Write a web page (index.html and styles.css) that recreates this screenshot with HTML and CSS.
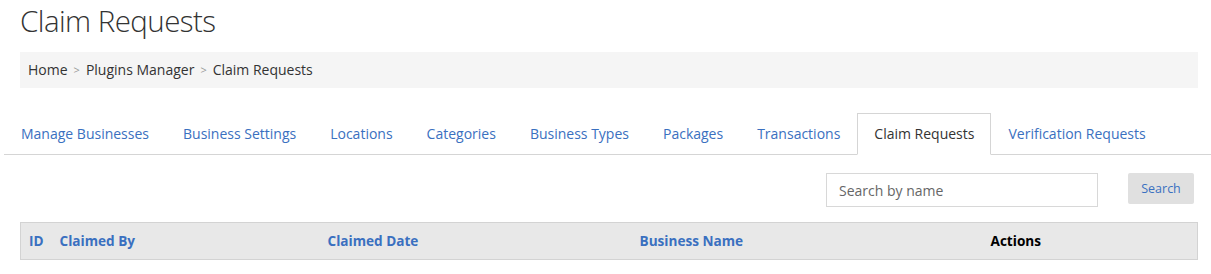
FILE: index.html
```html
<!DOCTYPE html>
<html>
<head>
<meta charset="utf-8">
<link rel="stylesheet" href="styles.css">
</head>
<body>
<div class="page">
  <h1 class="title">Claim Requests</h1>
  <div class="breadcrumb">
    <span>Home</span><span class="sep">&gt;</span><span>Plugins Manager</span><span class="sep">&gt;</span><span>Claim Requests</span>
  </div>
  <ul class="tabs">
    <li class="tab"><a>Manage Businesses</a></li>
    <li class="tab"><a>Business Settings</a></li>
    <li class="tab"><a>Locations</a></li>
    <li class="tab"><a>Categories</a></li>
    <li class="tab"><a>Business Types</a></li>
    <li class="tab"><a>Packages</a></li>
    <li class="tab"><a>Transactions</a></li>
    <li class="tab active"><a>Claim Requests</a></li>
    <li class="tab"><a>Verification Requests</a></li>
  </ul>
  <div class="search-row">
    <input class="search-input" type="text" placeholder="Search by name">
    <button class="search-btn">Search</button>
  </div>
  <table class="grid">
    <colgroup>
      <col class="c-id"><col class="c-by"><col class="c-date"><col class="c-name"><col class="c-act">
    </colgroup>
    <thead>
      <tr>
        <th class="link">ID</th>
        <th class="link">Claimed By</th>
        <th class="link">Claimed Date</th>
        <th class="link">Business Name</th>
        <th>Actions</th>
      </tr>
    </thead>
  </table>
</div>
</body>
</html>
```
FILE: styles.css
```css
* { box-sizing: border-box; }
html, body { margin: 0; padding: 0; background: #fff; }
body { font-family: "Open Sans", "Liberation Sans", sans-serif; font-size: 14px; color: #333; }
.page { padding: 0 13px 0 20px; }
.title { margin: 0; font-size: 29.5px; line-height: 42px; font-weight: 300; color: #333; letter-spacing: -0.55px; }
.breadcrumb { margin-top: 10px; background: #f5f5f5; padding: 8px 8px; line-height: 20px; height: 36px; color: #333; }
.breadcrumb .sep { color: #999; margin: 0 6px; font-size: 11px; position: relative; top: -1px; }
.tabs { list-style: none; margin: 25px -13px 0 -16px; padding: 0; display: flex; border-bottom: 1px solid #d5d5d5; }
.tab { margin-bottom: -1px; }
.tab a { display: block; padding: 10px 16px; line-height: 20px; border: 1px solid transparent; color: #3a70c0; }
.tab.active a { border-color: #d5d5d5; border-bottom-color: #fff; background: #fff; color: #333; }
.search-row { display: flex; justify-content: flex-end; align-items: flex-start; margin-top: 18px; padding-right: 4px; }
.search-input { width: 272px; height: 34px; border: 1px solid #d8d8d8; padding: 6px 12px; font-family: inherit; font-size: 14px; color: #555; outline: none; }
.search-input::placeholder { color: #666; }
.search-btn { margin-left: 30px; width: 66px; height: 31px; border: none; border-radius: 2px; background: #e0e0e0; color: #3a70c0; font-family: inherit; font-size: 12.5px; padding: 0; }
.grid { width: 100%; margin-top: 15px; border-collapse: collapse; table-layout: fixed; }
.c-id { width: 31px; }
.c-by { width: 268px; }
.c-date { width: 312px; }
.c-name { width: 351px; }
.grid th { background: #e8e8e8; border-top: 1px solid #d3d3d3; border-bottom: 1px solid #d3d3d3; text-align: left; padding: 8px 8px; line-height: 20px; font-size: 13.6px; font-weight: 700; color: #000; }
.grid th:first-child { border-left: 1px solid #d3d3d3; }
.grid th:last-child { border-right: 1px solid #d3d3d3; }
.grid th.link { color: #3a70c0; }
```
